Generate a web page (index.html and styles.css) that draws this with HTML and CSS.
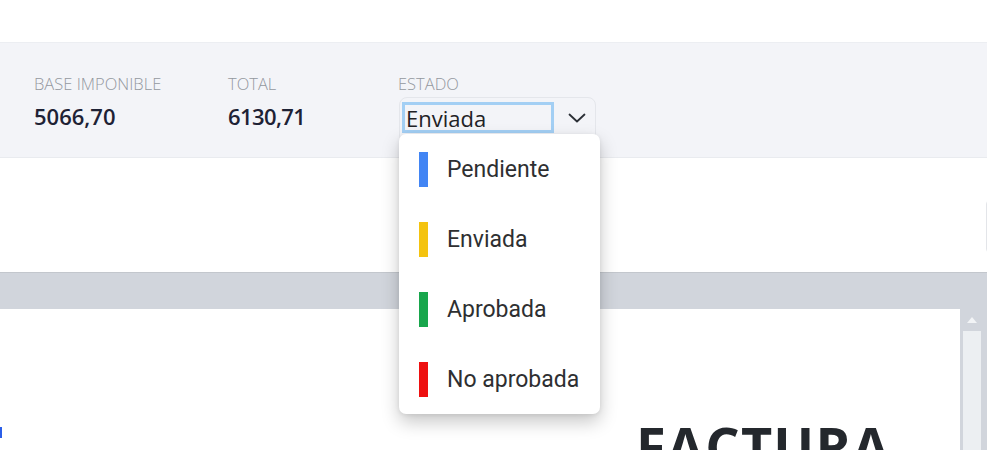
FILE: index.html
```html
<!DOCTYPE html>
<html lang="es">
<head>
<meta charset="utf-8">
<title>Factura</title>
<link rel="stylesheet" href="styles.css">
</head>
<body>
<div class="topbar"></div>
<section class="summary">
  <div class="field field-base">
    <div class="label">BASE IMPONIBLE</div>
    <div class="value">5066,70</div>
  </div>
  <div class="field field-total">
    <div class="label">TOTAL</div>
    <div class="value">6130,71</div>
  </div>
  <div class="field field-estado">
    <div class="label">ESTADO</div>
    <div class="select">
      <span class="select-input">Enviada</span>
      <svg class="chevron" width="18" height="10" viewBox="0 0 18 10"><polyline points="1.5,1.5 9,8.5 16.5,1.5" fill="none" stroke="#2b2f36" stroke-width="1.8" stroke-linecap="round" stroke-linejoin="round"/></svg>
      <ul class="menu">
        <li class="option"><span class="bar bar-blue"></span>Pendiente</li>
        <li class="option"><span class="bar bar-yellow"></span>Enviada</li>
        <li class="option"><span class="bar bar-green"></span>Aprobada</li>
        <li class="option"><span class="bar bar-red"></span>No aprobada</li>
      </ul>
    </div>
  </div>
</section>
<section class="toolbar">
  <div class="tool-btn"></div>
</section>
<section class="viewer">
  <div class="page">
    <div class="page-head">
      <span class="logo-edge"></span>
      <h1 class="doc-title">FACTURA</h1>
    </div>
  </div>
  <div class="scrollbar">
    <span class="scroll-up"></span>
    <span class="scroll-track"></span>
  </div>
</section>
</body>
</html>
```
FILE: styles.css
```css
* { box-sizing: border-box; }
html, body { margin: 0; padding: 0; }
body {
  width: 987px;
  height: 450px;
  overflow: hidden;
  background: #fff;
  font-family: "Open Sans", "Liberation Sans", sans-serif;
}
.topbar {
  height: 43px;
  border-bottom: 1px solid #eceef2;
  background: #fff;
}
.summary {
  height: 115px;
  background: #f3f4f8;
  border-bottom: 1px solid #e9ebef;
  display: flex;
  padding: 31px 0 0 34px;
}
.field { display: flex; flex-direction: column; }
.field-base { width: 194px; }
.field-total { width: 170px; }
.label {
  font-size: 16.5px;
  font-weight: 300;
  line-height: 20px;
  color: #94989f;
}
.value {
  margin-top: 8px;
  font-size: 22px;
  font-weight: 600;
  line-height: 28px;
  color: #1e2235;
}
.field-total .value { letter-spacing: -0.6px; }
.select {
  position: relative;
  margin-top: 3px;
  margin-left: 1px;
  width: 197px;
  height: 46px;
  border: 1px solid #e4e6eb;
  border-radius: 8px;
  background: #f3f4f8;
  display: flex;
  align-items: flex-start;
  padding: 4px 0 0 2px;
}
.select-input {
  display: block;
  width: 152px;
  height: 31px;
  border: 3px solid #a3cff4;
  padding: 0 1px;
  font-size: 22px;
  line-height: 26px;
  color: #1f2226;
  background: #f3f4f8;
}
.chevron { margin: 11px 0 0 14px; }
.menu {
  position: absolute;
  left: -1px;
  top: 36px;
  width: 201px;
  margin: 0;
  padding: 0;
  list-style: none;
  background: #fff;
  border-radius: 7px;
  box-shadow: 0 8px 18px rgba(0,0,0,0.22), 0 1px 4px rgba(0,0,0,0.08);
  z-index: 5;
}
.option {
  height: 70px;
  display: flex;
  align-items: center;
  padding-left: 20px;
  gap: 19px;
  font-family: Roboto, "Liberation Sans", sans-serif;
  font-size: 23px;
  color: #2e2f31;
}
.bar { width: 9px; height: 35px; flex: none; }
.bar-blue { background: #4285f4; }
.bar-yellow { background: #f4c30f; }
.bar-green { background: #18a64c; }
.bar-red { background: #ee1010; }
.toolbar {
  height: 114px;
  background: #fff;
  display: flex;
  justify-content: flex-end;
  padding-top: 42px;
}
.tool-btn {
  width: 40px;
  height: 53px;
  margin-right: -39px;
  border: 1px solid #e3e5e9;
  border-radius: 4px;
}
.viewer {
  border-top: 1px solid #c3c7cd;
  background: #d1d5dc;
  height: 200px;
  display: flex;
  padding-top: 36px;
}
.page {
  width: 960px;
  background: #fff;
}
.page-head {
  display: flex;
  align-items: flex-start;
}
.logo-edge {
  width: 2px;
  height: 11px;
  margin-top: 118px;
  background: #2b5ee8;
}
.doc-title {
  margin: 110px 0 0 634px;
  font-size: 54px;
  font-weight: 700;
  line-height: 54px;
  color: #24282d;
  letter-spacing: 1.2px;
}
.scrollbar {
  width: 27px;
  display: flex;
  flex-direction: column;
  align-items: center;
  padding-top: 8px;
}
.scroll-up {
  width: 0;
  height: 0;
  border-left: 5px solid transparent;
  border-right: 5px solid transparent;
  border-bottom: 6px solid #f2f4f6;
  margin-left: -4px;
}
.scroll-track {
  width: 18px;
  height: 200px;
  margin-top: 8px;
  margin-left: -4px;
  background: #eceff2;
}
```
